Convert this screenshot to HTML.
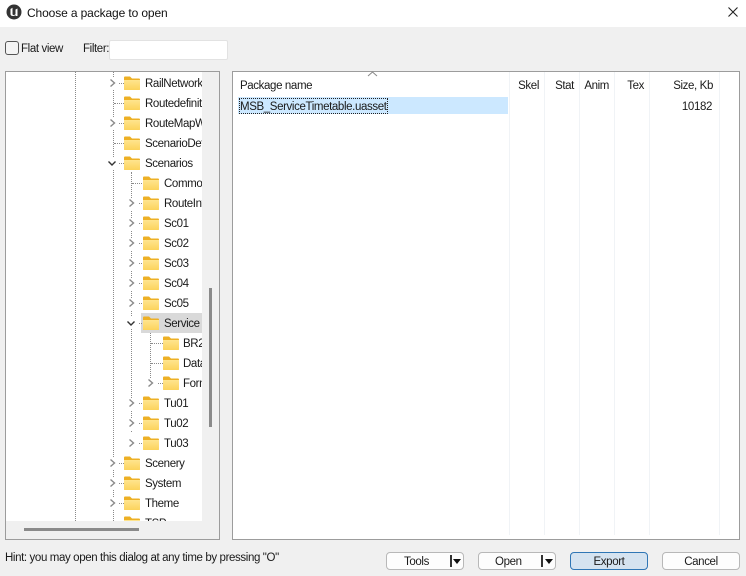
<!DOCTYPE html>
<html><head><meta charset="utf-8">
<style>
html,body{margin:0;padding:0}
body{width:746px;height:576px;position:relative;overflow:hidden;background:#f0f0f0;font-family:"Liberation Sans",sans-serif;font-size:11.5px;letter-spacing:-.38px;color:#1a1a1a}
.a{position:absolute;white-space:nowrap}
.btn{position:absolute;top:552px;height:16px;background:#fdfdfd;border:1px solid #b8b8b8;border-radius:4px;text-align:center;line-height:18px}
.r{position:absolute;line-height:16px;white-space:nowrap;margin-top:1px}
.v{position:absolute;width:0;border-left:1px dotted #8a8a8a}
.h{position:absolute;height:0;border-top:1px dotted #8a8a8a}
.sep{position:absolute;top:72px;height:463px;width:1px;background:#f0f3f6}
.t{position:absolute;line-height:16px;top:78px;text-align:right}
svg[width="12"]{background:#fff}
svg[width="18"]{margin-left:1px;margin-top:1px}
</style></head>
<body>
<svg width="0" height="0" style="position:absolute"><defs>
<linearGradient id="g" x1="0" y1="0" x2="0" y2="1"><stop offset="0" stop-color="#ffe58f"/><stop offset="1" stop-color="#fcd35c"/></linearGradient>
<symbol id="f" viewBox="0 0 18 14"><path d="M1 1.5Q1 .5 2 .5H7L9 2.5H16Q17 2.5 17 3.5V13Q17 14 16 14H2Q1 14 1 13Z" fill="#edb025"/><path d="M1 4H17V13Q17 14 16 14H2Q1 14 1 13Z" fill="url(#g)"/></symbol>
<symbol id="c" viewBox="0 0 12 12"><path d="M3.5 1.5L7.5 5L3.5 8.5" fill="none" stroke="#8a8a8a" stroke-width="1.4"/></symbol>
<symbol id="o" viewBox="0 0 12 12"><path d="M1.5 4.5L5 8L8.5 4.5" fill="none" stroke="#333" stroke-width="1.4"/></symbol>
</defs></svg>

<div class="a" style="left:0;top:0;width:746px;height:27px;background:#fff"></div>
<svg class="a" style="left:6px;top:4px" width="16" height="16" viewBox="0 0 16 16"><circle cx="8" cy="8" r="7.5" fill="#333"/><path d="M4.5 5V10Q4.5 12 7 12Q9 12 9.5 10.5V12H11.5V4.5L9.5 5.5V10Q9 11 8 11Q6.5 11 6.5 10V3.8Z" fill="#fff"/></svg>
<div class="a" style="left:27px;top:5px;line-height:16px;font-size:12px;letter-spacing:-.12px;color:#111">Choose a package to open</div>
<svg class="a" style="left:728px;top:7px" width="10" height="10" viewBox="0 0 10 10"><path d="M.5 .5L9.5 9.5M9.5 .5L.5 9.5" stroke="#222" stroke-width="1.1"/></svg>

<div class="a" style="left:5px;top:41px;width:12px;height:12px;border:1px solid #555;border-radius:3px;background:#f4f4f4"></div>
<div class="a" style="left:21px;top:41px;line-height:16px">Flat view</div>
<div class="a" style="left:83px;top:41px;line-height:16px">Filter:</div>
<div class="a" style="left:109px;top:40px;width:117px;height:18px;background:#fff;border:1px solid #e2e2e2;border-radius:2px"></div>

<!-- tree -->
<div class="a" style="left:5px;top:71px;width:213px;height:467px;border:1px solid #9c9c9c;background:#f0f0f0"></div>
<div class="a" style="left:6px;top:72px;width:196px;height:449px;background:#fff;overflow:hidden">
  <div class="v" style="left:69px;top:0;height:449px"></div>
  <div class="v" style="left:107px;top:0;height:449px"></div>
  <div class="v" style="left:125px;top:100px;height:260px"></div>
  <div class="v" style="left:144px;top:260px;height:50px"></div>

  <div class="h" style="left:112px;top:11px;width:10px"></div><svg class="a" style="left:101px;top:6px" width="12" height="12"><use href="#c"/></svg><svg class="a" style="left:116px;top:3px" width="18" height="14"><use href="#f"/></svg><div class="r" style="left:139px;top:3px">RailNetwork</div>
  <div class="h" style="left:108px;top:31px;width:12px"></div><svg class="a" style="left:116px;top:23px" width="18" height="14"><use href="#f"/></svg><div class="r" style="left:139px;top:23px">Routedefinition</div>
  <div class="h" style="left:112px;top:51px;width:10px"></div><svg class="a" style="left:101px;top:46px" width="12" height="12"><use href="#c"/></svg><svg class="a" style="left:116px;top:43px" width="18" height="14"><use href="#f"/></svg><div class="r" style="left:139px;top:43px">RouteMapWidget</div>
  <div class="h" style="left:108px;top:71px;width:12px"></div><svg class="a" style="left:116px;top:63px" width="18" height="14"><use href="#f"/></svg><div class="r" style="left:139px;top:63px">ScenarioDefinition</div>
  <div class="h" style="left:112px;top:91px;width:10px"></div><svg class="a" style="left:101px;top:85px" width="12" height="12"><use href="#o"/></svg><svg class="a" style="left:116px;top:83px" width="18" height="14"><use href="#f"/></svg><div class="r" style="left:139px;top:83px">Scenarios</div>

  <div class="h" style="left:126px;top:111px;width:12px"></div><svg class="a" style="left:135px;top:103px" width="18" height="14"><use href="#f"/></svg><div class="r" style="left:158px;top:103px">Common</div>
  <div class="h" style="left:130px;top:131px;width:8px"></div><svg class="a" style="left:120px;top:126px" width="12" height="12"><use href="#c"/></svg><svg class="a" style="left:135px;top:123px" width="18" height="14"><use href="#f"/></svg><div class="r" style="left:158px;top:123px">RouteInfo</div>
  <div class="h" style="left:130px;top:151px;width:8px"></div><svg class="a" style="left:120px;top:146px" width="12" height="12"><use href="#c"/></svg><svg class="a" style="left:135px;top:143px" width="18" height="14"><use href="#f"/></svg><div class="r" style="left:158px;top:143px">Sc01</div>
  <div class="h" style="left:130px;top:171px;width:8px"></div><svg class="a" style="left:120px;top:166px" width="12" height="12"><use href="#c"/></svg><svg class="a" style="left:135px;top:163px" width="18" height="14"><use href="#f"/></svg><div class="r" style="left:158px;top:163px">Sc02</div>
  <div class="h" style="left:130px;top:191px;width:8px"></div><svg class="a" style="left:120px;top:186px" width="12" height="12"><use href="#c"/></svg><svg class="a" style="left:135px;top:183px" width="18" height="14"><use href="#f"/></svg><div class="r" style="left:158px;top:183px">Sc03</div>
  <div class="h" style="left:130px;top:211px;width:8px"></div><svg class="a" style="left:120px;top:206px" width="12" height="12"><use href="#c"/></svg><svg class="a" style="left:135px;top:203px" width="18" height="14"><use href="#f"/></svg><div class="r" style="left:158px;top:203px">Sc04</div>
  <div class="h" style="left:130px;top:231px;width:8px"></div><svg class="a" style="left:120px;top:226px" width="12" height="12"><use href="#c"/></svg><svg class="a" style="left:135px;top:223px" width="18" height="14"><use href="#f"/></svg><div class="r" style="left:158px;top:223px">Sc05</div>

  <div class="a" style="left:135px;top:241px;width:61px;height:20px;background:#d9d9d9"></div>
  <div class="h" style="left:130px;top:251px;width:8px"></div><svg class="a" style="left:120px;top:245px" width="12" height="12"><use href="#o"/></svg><svg class="a" style="left:135px;top:243px" width="18" height="14"><use href="#f"/></svg><div class="r" style="left:158px;top:243px">Service Timetable</div>

  <div class="h" style="left:145px;top:271px;width:12px"></div><svg class="a" style="left:155px;top:263px" width="18" height="14"><use href="#f"/></svg><div class="r" style="left:177px;top:263px">BR205</div>
  <div class="h" style="left:145px;top:291px;width:12px"></div><svg class="a" style="left:155px;top:283px" width="18" height="14"><use href="#f"/></svg><div class="r" style="left:177px;top:283px">Data</div>
  <div class="h" style="left:149px;top:311px;width:8px"></div><svg class="a" style="left:139px;top:306px" width="12" height="12"><use href="#c"/></svg><svg class="a" style="left:155px;top:303px" width="18" height="14"><use href="#f"/></svg><div class="r" style="left:177px;top:303px">Formation</div>

  <div class="h" style="left:130px;top:331px;width:8px"></div><svg class="a" style="left:120px;top:326px" width="12" height="12"><use href="#c"/></svg><svg class="a" style="left:135px;top:323px" width="18" height="14"><use href="#f"/></svg><div class="r" style="left:158px;top:323px">Tu01</div>
  <div class="h" style="left:130px;top:351px;width:8px"></div><svg class="a" style="left:120px;top:346px" width="12" height="12"><use href="#c"/></svg><svg class="a" style="left:135px;top:343px" width="18" height="14"><use href="#f"/></svg><div class="r" style="left:158px;top:343px">Tu02</div>
  <div class="h" style="left:130px;top:371px;width:8px"></div><svg class="a" style="left:120px;top:366px" width="12" height="12"><use href="#c"/></svg><svg class="a" style="left:135px;top:363px" width="18" height="14"><use href="#f"/></svg><div class="r" style="left:158px;top:363px">Tu03</div>

  <div class="h" style="left:112px;top:391px;width:10px"></div><svg class="a" style="left:101px;top:386px" width="12" height="12"><use href="#c"/></svg><svg class="a" style="left:116px;top:383px" width="18" height="14"><use href="#f"/></svg><div class="r" style="left:139px;top:383px">Scenery</div>
  <div class="h" style="left:112px;top:411px;width:10px"></div><svg class="a" style="left:101px;top:406px" width="12" height="12"><use href="#c"/></svg><svg class="a" style="left:116px;top:403px" width="18" height="14"><use href="#f"/></svg><div class="r" style="left:139px;top:403px">System</div>
  <div class="h" style="left:112px;top:431px;width:10px"></div><svg class="a" style="left:101px;top:426px" width="12" height="12"><use href="#c"/></svg><svg class="a" style="left:116px;top:423px" width="18" height="14"><use href="#f"/></svg><div class="r" style="left:139px;top:423px">Theme</div>
  <svg class="a" style="left:116px;top:443px" width="18" height="14"><use href="#f"/></svg><div class="r" style="left:139px;top:443px">TSP</div>
</div>
<div class="a" style="left:209px;top:288px;width:3px;height:139px;background:#8a8a8a"></div>
<div class="a" style="left:24px;top:528px;width:115px;height:3px;background:#8a8a8a"></div>

<!-- list -->
<div class="a" style="left:232px;top:71px;width:506px;height:467px;border:1px solid #9c9c9c;background:#fff"></div>
<div class="sep" style="left:509px"></div>
<div class="sep" style="left:544px"></div>
<div class="sep" style="left:579px"></div>
<div class="sep" style="left:614px"></div>
<div class="sep" style="left:649px"></div>
<div class="sep" style="left:719px"></div>
<svg class="a" style="left:367px;top:71px" width="11" height="6"><path d="M1 5L5.5 1L10 5" fill="none" stroke="#888"/></svg>
<div class="a" style="left:240px;top:78px;line-height:16px">Package name</div>
<div class="t" style="left:510px;width:29px">Skel</div>
<div class="t" style="left:545px;width:29px">Stat</div>
<div class="t" style="left:580px;width:29px">Anim</div>
<div class="t" style="left:615px;width:29px">Tex</div>
<div class="t" style="left:650px;width:63px">Size, Kb</div>
<div class="a" style="left:238px;top:97px;width:270px;height:17px;background:#cce8ff"></div>
<div class="a" style="left:239px;top:98px;width:147px;height:14px;border:1px dotted #222;line-height:16px">MSB_ServiceTimetable.uasset</div>
<div class="t" style="left:650px;width:62px;top:99px">10182</div>

<div class="a" style="left:5px;top:550px;line-height:16px">Hint: you may open this dialog at any time by pressing "O"</div>

<div class="btn" style="left:386px;width:76px"><span style="position:absolute;left:17px">Tools</span></div>
<div class="a" style="left:450px;top:555px;width:2px;height:12px;background:#333"></div>
<svg class="a" style="left:453px;top:559px" width="8" height="5"><path d="M0 0H8L4 5Z" fill="#111"/></svg>
<div class="btn" style="left:478px;width:76px"><span style="position:absolute;left:16px">Open</span></div>
<div class="a" style="left:541px;top:555px;width:2px;height:12px;background:#333"></div>
<svg class="a" style="left:545px;top:559px" width="8" height="5"><path d="M0 0H8L4 5Z" fill="#111"/></svg>
<div class="btn" style="left:570px;width:76px;background:#d5e3f0;border-color:#2f76b5">Export</div>
<div class="btn" style="left:662px;width:76px">Cancel</div>
</body></html>
